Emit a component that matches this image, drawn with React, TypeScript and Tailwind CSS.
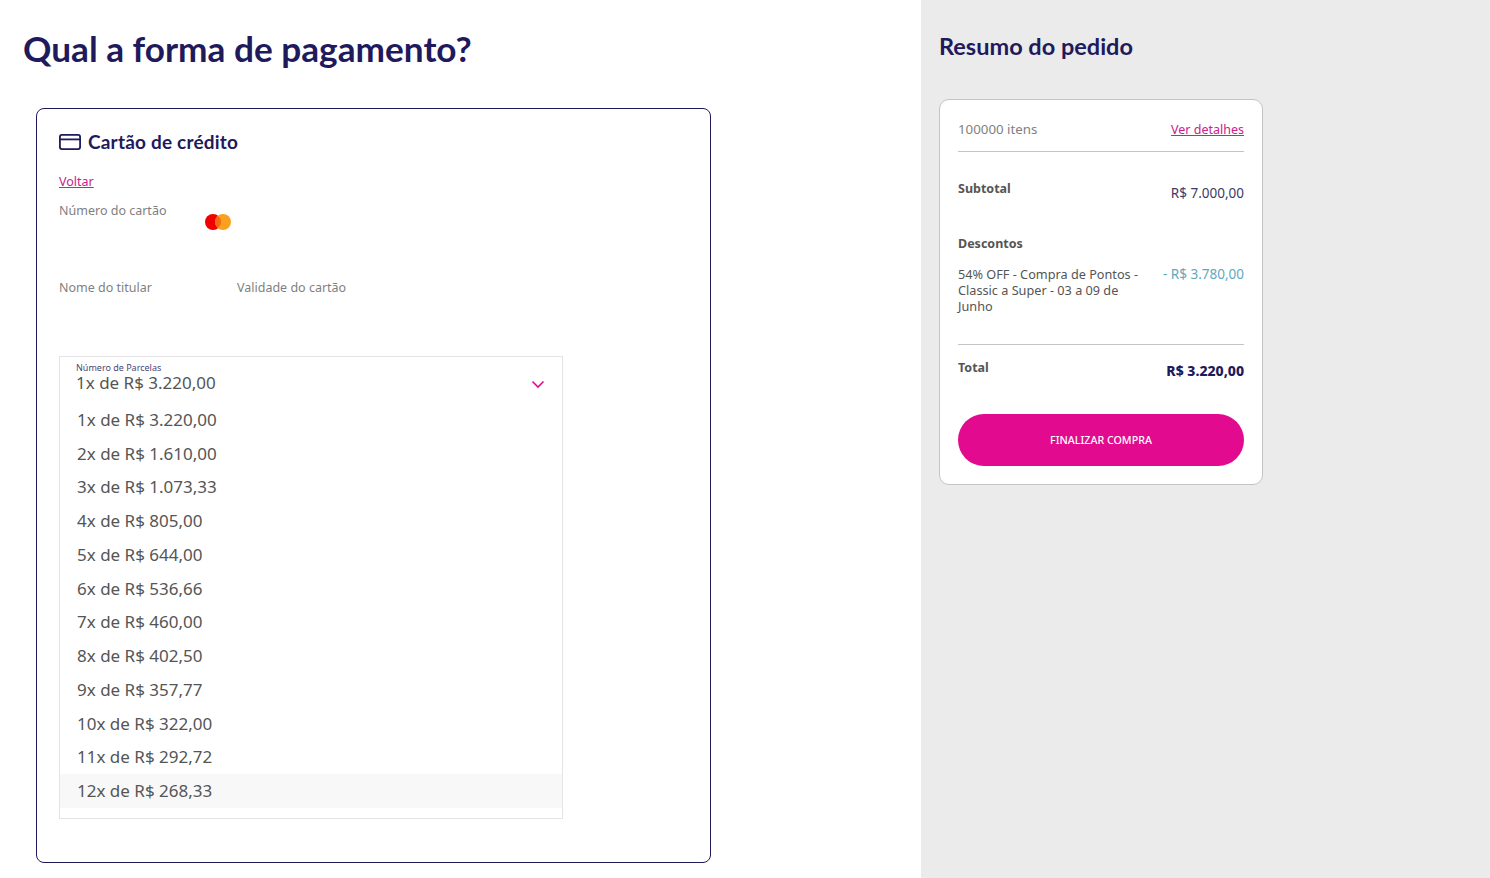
const parcelas = [
  '1x de R$ 3.220,00',
  '2x de R$ 1.610,00',
  '3x de R$ 1.073,33',
  '4x de R$ 805,00',
  '5x de R$ 644,00',
  '6x de R$ 536,66',
  '7x de R$ 460,00',
  '8x de R$ 402,50',
  '9x de R$ 357,77',
  '10x de R$ 322,00',
  '11x de R$ 292,72',
  '12x de R$ 268,33',
];

function CardIcon() {
  return (
    <svg width="22" height="16" viewBox="0 0 22 16" fill="none" stroke="#1f1a5c" strokeWidth="1.8" className="shrink-0">
      <rect x="0.9" y="0.9" width="20.2" height="14.2" rx="2" />
      <path d="M0.9 5.4H21.1" />
    </svg>
  );
}

function Mastercard() {
  return (
    <svg width="26" height="16" viewBox="0 0 26 16" className="block">
      <circle cx="8" cy="8" r="8" fill="#f00000" />
      <circle cx="18" cy="8" r="8" fill="#f9a01e" />
      <path d="M13 1.76a8 8 0 0 1 0 12.48a8 8 0 0 1 0-12.48z" fill="#f26a12" />
    </svg>
  );
}

function Chevron() {
  return (
    <svg width="14" height="9" viewBox="0 0 14 9" fill="none" stroke="#e20a8f" strokeWidth="1.6" className="mt-[23px] shrink-0">
      <path d="M1.5 1.5L7 7l5.5-5.5" />
    </svg>
  );
}

export default function App() {
  return (
    <div className="flex h-[878px] w-full overflow-hidden bg-white font-['Noto_Sans','Lato',sans-serif] text-[#555555]">
      <main className="w-[921px] shrink-0 pl-[23px] pt-[28px]">
        <h1 className="font-['Lato',sans-serif] text-[35.2px] leading-[41px] font-bold text-[#1f1a5c]">Qual a forma de pagamento?</h1>

        <section className="ml-[13px] mt-[39px] h-[755px] w-[675px] rounded-lg border border-[#1f1a5c] px-[22px] pt-[20px]">
          <div className="flex items-center gap-[7px]">
            <CardIcon />
            <h2 className="font-['Lato',sans-serif] text-[19px] leading-[26px] font-bold tracking-[0.2px] text-[#1f1a5c]">Cartão de crédito</h2>
          </div>

          <a className="mt-[18px] block w-fit text-[12.5px] leading-[17px] text-[#c9218e] underline">Voltar</a>

          <div className="mt-[12px] flex items-start">
            <span className="w-[146px] text-[12.5px] leading-[17px] text-[#7f7f7f]">Número do cartão</span>
            <div className="pt-[12px]"><Mastercard /></div>
          </div>

          <div className="mt-[49px] flex text-[12.5px] leading-[17px] text-[#7f7f7f]">
            <span className="w-[178px]">Nome do titular</span>
            <span>Validade do cartão</span>
          </div>

          <div className="mt-[60px] w-[504px] border border-[#e4e4e4] pb-[10.25px]">
            <div className="flex h-[43px] items-start justify-between pl-[16px] pr-[17px]">
              <div className="pt-[5px]">
                <div className="text-[9px] leading-[11px] text-[#4a4775]">Número de Parcelas</div>
                <div className="text-[17px] leading-[20px]">1x de R$ 3.220,00</div>
              </div>
              <Chevron />
            </div>
            <ul className="pt-[2.75px]">
              {parcelas.map((p, i) => (
                <li key={p} className={i === 11 ? 'flex h-[33.75px] items-center bg-[#f8f8f8] pl-[17px] text-[17px]' : 'flex h-[33.75px] items-center pl-[17px] text-[17px]'}>
                  {p}
                </li>
              ))}
            </ul>
          </div>
        </section>
      </main>

      <aside className="flex-1 bg-[#ebebeb] pl-[18px] pt-[32px]">
        <h2 className="font-['Lato',sans-serif] text-[23.5px] leading-[28px] font-bold text-[#1f1a5c]">Resumo do pedido</h2>

        <div className="mt-[39px] h-[386px] w-[324px] rounded-[10px] border border-[#c4c4c4] bg-white px-[18px] pt-[21px]">
          <div className="flex items-start justify-between border-b border-[#c4c4c4] pb-[12px] text-[12.5px] leading-[18px]">
            <span className="text-[13.3px] leading-[16px] text-[#7f7f7f]">100000 itens</span>
            <a className="text-[#c9218e] underline">Ver detalhes</a>
          </div>

          <div className="mt-[28px] flex items-start justify-between text-[12.5px]">
            <span className="leading-[17px] font-bold">Subtotal</span>
            <span className="pt-[4px] text-[13.5px] leading-[18px] text-[#3c3a66]">R$ 7.000,00</span>
          </div>

          <div className="mt-[33px] text-[12.5px] leading-[17px] font-bold">Descontos</div>

          <div className="mt-[14px] flex items-start justify-between text-[12.7px] leading-[16px]">
            <span className="w-[190px]">54% OFF - Compra de Pontos - Classic a Super - 03 a 09 de Junho</span>
            <span className="text-[13.5px] text-[#5fa9bd]">- R$ 3.780,00</span>
          </div>

          <div className="mt-[30px] flex items-start justify-between border-t border-[#c4c4c4] pt-[14px] text-[12.5px]">
            <span className="leading-[17px] font-bold">Total</span>
            <span className="pt-[3px] text-[14px] leading-[18px] font-extrabold text-[#1f1a5c]">R$ 3.220,00</span>
          </div>

          <button className="mt-[34px] h-[52px] w-full rounded-full bg-[#e20a8f] pt-[1px] text-[10.7px] font-medium text-white">FINALIZAR COMPRA</button>
        </div>
      </aside>
    </div>
  );
}
